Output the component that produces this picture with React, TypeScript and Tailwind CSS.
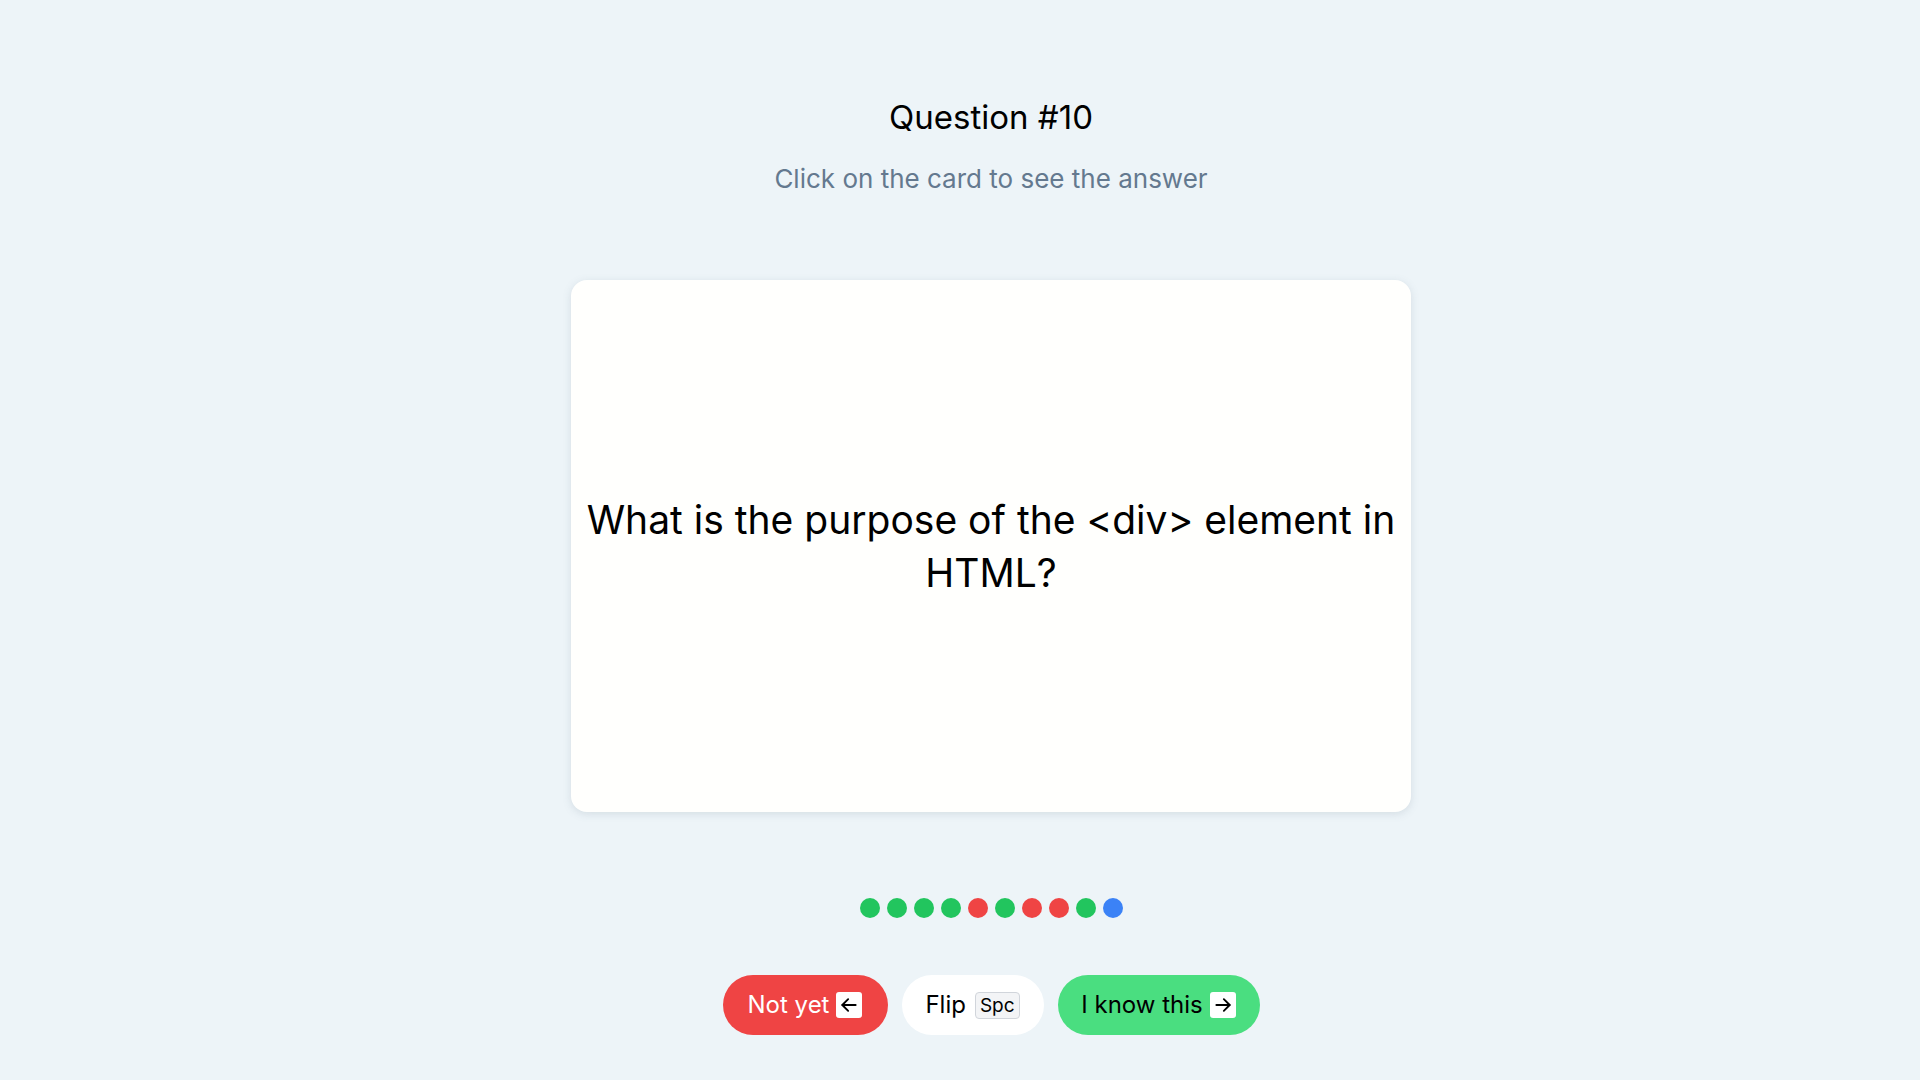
import React from "react";

const dots = ["g", "g", "g", "g", "r", "g", "r", "r", "g", "b"];

const dotColor: Record<string, string> = {
  g: "bg-[#22c55e]",
  r: "bg-[#ef4444]",
  b: "bg-[#3b82f6]",
};

const ArrowLeft = () => (
  <svg width="20" height="20" viewBox="0 0 24 24" fill="none" stroke="currentColor" strokeWidth="2.2" strokeLinecap="round" strokeLinejoin="round">
    <path d="M20 12H4" />
    <path d="M11 19l-7-7 7-7" />
  </svg>
);

const ArrowRight = () => (
  <svg width="20" height="20" viewBox="0 0 24 24" fill="none" stroke="currentColor" strokeWidth="2.2" strokeLinecap="round" strokeLinejoin="round">
    <path d="M4 12h16" />
    <path d="M13 5l7 7-7 7" />
  </svg>
);

const App = () => {
  return (
    <div
      className="min-h-screen bg-[#edf4f8] flex flex-col items-center pt-[96px] pl-[62px]"
      style={{ fontFamily: "Inter, 'Noto Sans', sans-serif" }}
    >
      <h1 className="text-[33px] leading-[42px] text-black">Question #10</h1>
      <p className="mt-[24px] text-[26px] leading-[34px] text-[#64798f]">
        Click on the card to see the answer
      </p>

      <div className="mt-[84px] w-[840px] h-[532px] bg-[#fffffd] rounded-2xl shadow-[0_2px_8px_rgba(100,120,140,0.18)] flex items-center justify-center px-3 cursor-pointer">
        <p className="text-[39px] leading-[53px] text-black text-center">
          What is the purpose of the &lt;div&gt; element in HTML?
        </p>
      </div>

      <div className="mt-[86px] flex gap-[7px]">
        {dots.map((d, i) => (
          <span key={i} className={`w-5 h-5 rounded-full ${dotColor[d]}`}></span>
        ))}
      </div>

      <div className="mt-[57px] flex gap-[14px]">
        <button className="h-[60px] w-[165px] rounded-full bg-[#ef4444] text-white text-[24px] flex items-center justify-center gap-[7px]">
          Not yet
          <span className="w-[26px] h-[26px] bg-white text-black rounded-[3px] flex items-center justify-center">
            <ArrowLeft />
          </span>
        </button>
        <button className="h-[60px] w-[142px] rounded-full bg-white text-black text-[24px] flex items-center justify-center gap-[9px]">
          Flip
          <span className="h-[27px] px-[4px] border border-[#d1d5db] bg-[#f3f4f6] rounded-[4px] text-[19px] leading-[25px] flex items-center">
            Spc
          </span>
        </button>
        <button className="h-[60px] w-[202px] rounded-full bg-[#4ade80] text-black text-[24px] flex items-center justify-center gap-[7px]">
          I know this
          <span className="w-[26px] h-[26px] bg-white text-black rounded-[3px] flex items-center justify-center">
            <ArrowRight />
          </span>
        </button>
      </div>
    </div>
  );
};

export default App;
